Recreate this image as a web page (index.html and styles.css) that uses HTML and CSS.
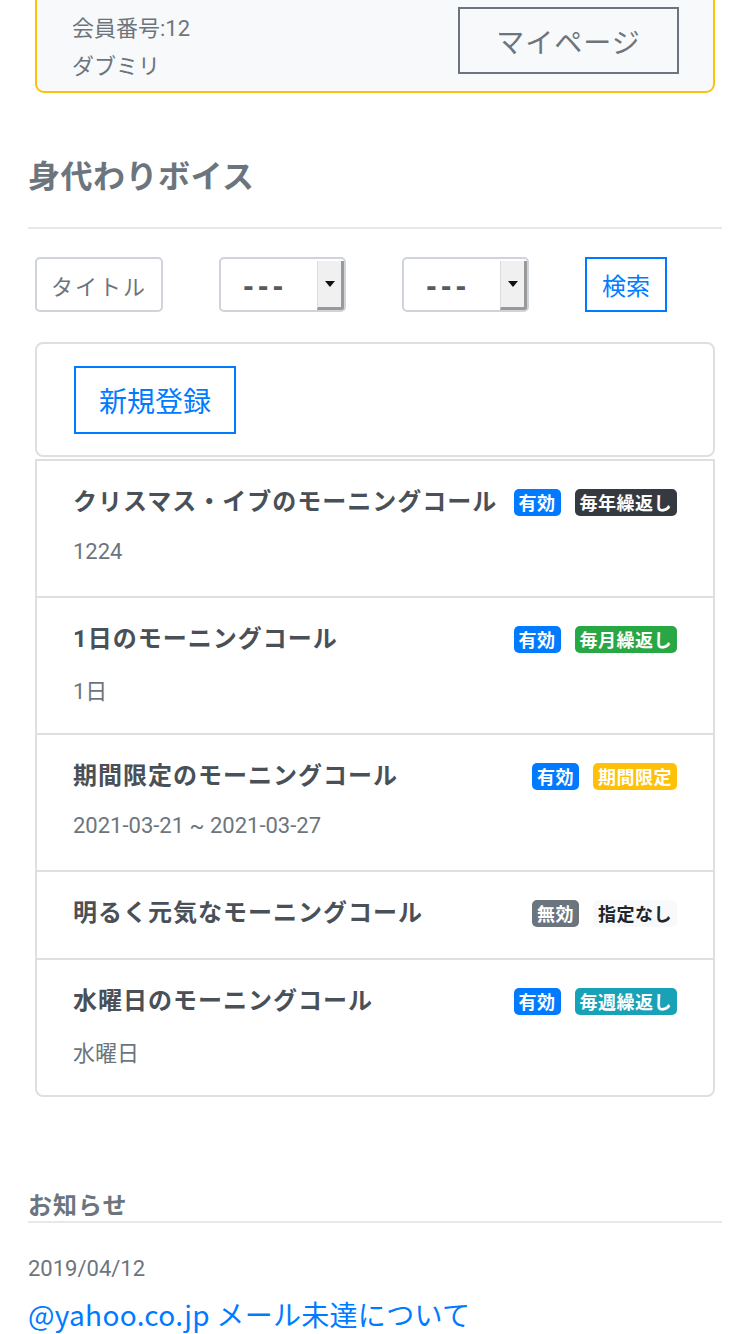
FILE: index.html
```html
<!DOCTYPE html>
<html lang="ja">
<head>
<meta charset="utf-8">
<title>身代わりボイス</title>
<link rel="stylesheet" href="styles.css">
</head>
<body>
<div class="page">
  <div class="member-card">
    <div class="member-info">
      <div class="member-line">会員番号:12</div>
      <div class="member-line">ダブミリ</div>
    </div>
    <div class="btn-mypage">マイページ</div>
  </div>

  <h2 class="section-title">身代わりボイス</h2>
  <div class="rule"></div>

  <div class="filters">
    <div class="input-title">タイトル</div>
    <div class="select">
      <span class="select-value">---</span>
      <span class="select-arrow"><span class="tri"></span></span>
    </div>
    <div class="select">
      <span class="select-value">---</span>
      <span class="select-arrow"><span class="tri"></span></span>
    </div>
    <div class="btn-search">検索</div>
  </div>

  <div class="new-card">
    <div class="btn-new">新規登録</div>
  </div>

  <div class="list">
    <div class="item">
      <div class="item-head">
        <div class="item-title">クリスマス・イブのモーニングコール</div>
        <div class="badges"><span class="badge b-blue">有効</span><span class="badge b-dark">毎年繰返し</span></div>
      </div>
      <div class="item-sub">1224</div>
    </div>
    <div class="item">
      <div class="item-head">
        <div class="item-title">1日のモーニングコール</div>
        <div class="badges"><span class="badge b-blue">有効</span><span class="badge b-green">毎月繰返し</span></div>
      </div>
      <div class="item-sub">1日</div>
    </div>
    <div class="item">
      <div class="item-head">
        <div class="item-title">期間限定のモーニングコール</div>
        <div class="badges"><span class="badge b-blue">有効</span><span class="badge b-yellow">期間限定</span></div>
      </div>
      <div class="item-sub">2021-03-21 ~ 2021-03-27</div>
    </div>
    <div class="item item-single">
      <div class="item-head">
        <div class="item-title">明るく元気なモーニングコール</div>
        <div class="badges"><span class="badge b-gray">無効</span><span class="badge b-light">指定なし</span></div>
      </div>
    </div>
    <div class="item">
      <div class="item-head">
        <div class="item-title">水曜日のモーニングコール</div>
        <div class="badges"><span class="badge b-blue">有効</span><span class="badge b-teal">毎週繰返し</span></div>
      </div>
      <div class="item-sub">水曜日</div>
    </div>
  </div>

  <h3 class="news-title">お知らせ</h3>
  <div class="rule rule-news"></div>
  <div class="news-date">2019/04/12</div>
  <a class="news-link" href="#">@yahoo.co.jp メール未達について</a>
</div>
</body>
</html>
```

FILE: styles.css
```css
* { box-sizing: border-box; }
html, body {
  margin: 0;
  padding: 0;
  background: #ffffff;
}
body {
  font-family: "Noto Sans CJK JP", "Noto Sans", sans-serif;
  color: #6c757d;
  overflow: hidden;
}
.page {
  padding: 0 28px;
  width: 750px;
}

/* member card */
.member-card {
  margin: -14px 7px 0;
  border: 2px solid #ffc107;
  border-radius: 9px;
  background: #f8f9fa;
  padding: 19px 34px 8px 35px;
  display: flex;
  justify-content: space-between;
  align-items: flex-start;
}
.member-line {
  height: 38px;
  display: flex;
  align-items: center;
  font-family: "Roboto", "Noto Sans CJK JP", sans-serif;
  font-size: 22px;
  color: #6c757d;
}
.btn-mypage {
  width: 221px;
  height: 67px;
  border: 2px solid #6c757d;
  display: flex;
  align-items: center;
  justify-content: center;
  font-size: 28px;
  letter-spacing: 1px;
  color: #6c757d;
}

/* section title */
.section-title {
  margin: 58px 0 0;
  font-size: 32px;
  line-height: 46px;
  font-weight: 700;
  letter-spacing: 0.5px;
  color: #6c757d;
}
.rule {
  height: 2px;
  background: #e6e8ea;
  margin-top: 30px;
}

/* filters */
.filters {
  display: flex;
  gap: 56px;
  margin: 28px 7px 0;
}
.input-title {
  width: 128px;
  height: 55px;
  border: 2px solid #ced4da;
  border-radius: 5px;
  display: flex;
  align-items: center;
  justify-content: center;
  font-size: 22px;
  letter-spacing: 2px;
  color: #6c757d;
}
.select {
  width: 127px;
  height: 55px;
  border: 2px solid #ced4da;
  border-radius: 5px;
  display: flex;
  overflow: hidden;
  background: #fff;
}
.select-value {
  flex: 1;
  display: flex;
  align-items: center;
  padding: 4px 0 0 22px;
  font-family: "DejaVu Sans", sans-serif;
  font-size: 26px;
  font-weight: 700;
  letter-spacing: 4px;
  color: #555b61;
}
.select-arrow {
  width: 27px;
  margin-top: 2px;
  background: #f0f0f0;
  border-left: 1px solid #dcdcdc;
  border-right: 3px solid #999;
  border-bottom: 3px solid #999;
  display: flex;
  align-items: center;
  justify-content: center;
}
.tri {
  width: 0;
  height: 0;
  border-left: 5px solid transparent;
  border-right: 5px solid transparent;
  border-top: 6px solid #111;
}
.btn-search {
  width: 82px;
  height: 55px;
  border: 2px solid #007bff;
  display: flex;
  align-items: center;
  justify-content: center;
  font-size: 24px;
  color: #007bff;
}

/* new card */
.new-card {
  margin: 30px 7px 0;
  border: 2px solid #dfdfdf;
  border-radius: 8px;
  padding: 22px 37px 21px;
}
.btn-new {
  width: 162px;
  height: 68px;
  border: 2px solid #007bff;
  display: flex;
  align-items: center;
  justify-content: center;
  font-size: 28px;
  color: #007bff;
}

/* list */
.list {
  margin: 2px 7px 0;
  border: 2px solid #dfdfdf;
  border-radius: 0 0 8px 8px;
}
.item {
  padding: 22px 36px 28px;
  border-top: 2px solid #dfdfdf;
}
.item:first-child { border-top: none; }
.item-single { padding-bottom: 31px; }
.item-head {
  display: flex;
  justify-content: space-between;
  align-items: flex-start;
}
.item-title {
  height: 33px;
  display: flex;
  align-items: center;
  font-family: "Roboto", "Noto Sans CJK JP", sans-serif;
  font-size: 24px;
  font-weight: 700;
  letter-spacing: 1px;
  color: #495057;
  white-space: nowrap;
}
.badges {
  display: flex;
  gap: 14px;
  margin-top: 6px;
  flex-shrink: 0;
}
.badge {
  height: 27px;
  padding: 0 5px;
  border-radius: 5px;
  font-size: 18px;
  line-height: 27px;
  font-weight: 700;
  color: #fff;
  letter-spacing: 0.5px;
}
.b-blue { background: #007bff; }
.b-dark { background: #343a40; }
.b-green { background: #28a745; }
.b-yellow { background: #ffc107; }
.b-gray { background: #6c757d; }
.b-light { background: #f8f9fa; color: #212529; }
.b-teal { background: #17a2b8; }
.item-sub {
  height: 33px;
  display: flex;
  align-items: center;
  margin-top: 19px;
  font-family: "Roboto", "Noto Sans CJK JP", sans-serif;
  font-size: 22px;
  color: #6c757d;
}

/* news */
.news-title {
  margin: 90px 0 0;
  font-size: 24px;
  line-height: 33px;
  font-weight: 700;
  letter-spacing: 1px;
  color: #6c757d;
}
.rule-news {
  margin-top: 1px;
}
.news-date {
  margin-top: 29px;
  font-family: "Roboto", sans-serif;
  font-size: 22px;
  line-height: 33px;
  color: #6c757d;
}
.news-link {
  display: block;
  margin-top: 8px;
  font-size: 28px;
  line-height: 42px;
  letter-spacing: 0.3px;
  color: #007bff;
  text-decoration: none;
}
```
